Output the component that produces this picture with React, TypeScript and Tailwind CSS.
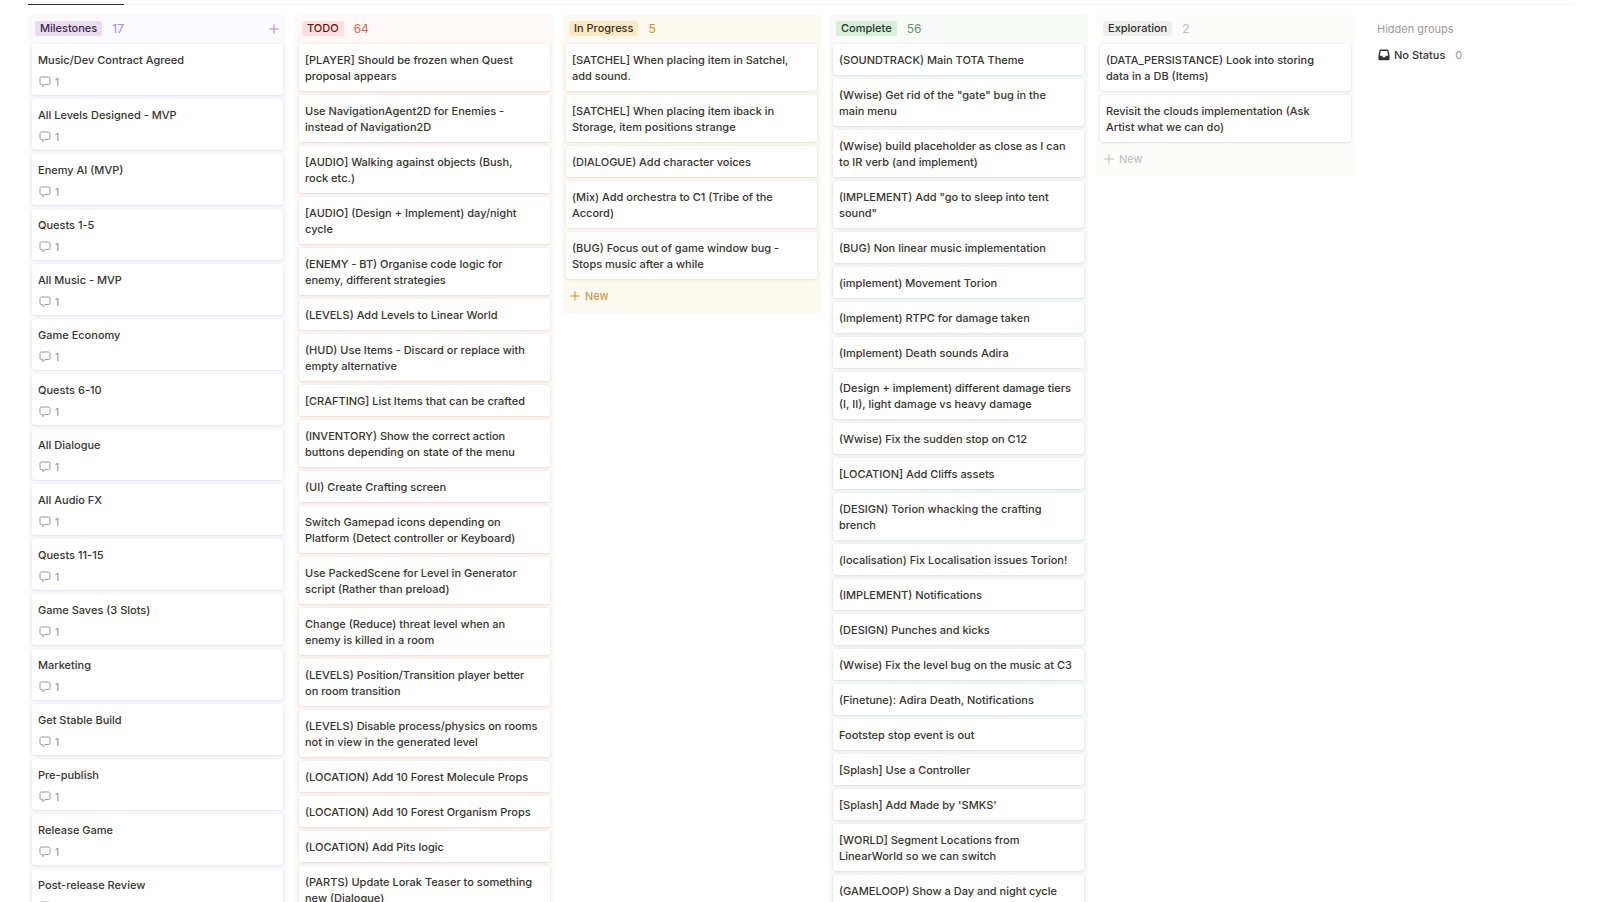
type Theme = {
  column: string;
  tag: string;
  accent: string;
  card: string;
};

type Card = { title: string; comments?: number };

type Group = {
  name: string;
  count: number;
  theme: Theme;
  cards: Card[];
  headerAdd?: boolean;
  footerAdd?: boolean;
};

const themes: Record<string, Theme> = {
  purple: {
    column: "bg-[#faf9fe]",
    tag: "bg-[#e8deee] text-[#412454]",
    accent: "text-[#b283d3]",
    card: "shadow-[0_0_0_1px_rgba(60,40,110,0.02),0_1px_3px_rgba(50,40,80,0.09)]",
  },
  red: {
    column: "bg-[#fef8f6]",
    tag: "bg-[#ffe0dd] text-[#5d1715]",
    accent: "text-[#e0645c]",
    card: "shadow-[0_0_0_1px_rgba(140,50,40,0.02),0_1px_3px_rgba(110,40,40,0.12)]",
  },
  yellow: {
    column: "bg-[#fcf9f1]",
    tag: "bg-[#fdeac5] text-[#402c1b]",
    accent: "text-[#ca8f2e]",
    card: "shadow-[0_0_0_1px_rgba(80,60,20,0.02),0_1px_3px_rgba(70,55,20,0.1)]",
  },
  green: {
    column: "bg-[#f7faf7]",
    tag: "bg-[#d9eddb] text-[#1c3829]",
    accent: "text-[#5a9872]",
    card: "shadow-[0_0_0_1px_rgba(20,50,40,0.02),0_1px_3px_rgba(20,45,35,0.1)]",
  },
  gray: {
    column: "bg-[#fcfcfa]",
    tag: "bg-[#eeeeec] text-[#32302c]",
    accent: "text-[#bdbcb9]",
    card: "shadow-[0_0_0_1px_rgba(20,20,20,0.02),0_1px_3px_rgba(20,20,20,0.1)]",
  },
};

const toCards = (titles: string[], comments?: number): Card[] =>
  titles.map((title) => ({ title, comments }));

const groups: Group[] = [
  {
    name: "Milestones",
    count: 17,
    theme: themes.purple,
    headerAdd: true,
    cards: toCards(
      [
        "Music/Dev Contract Agreed",
        "All Levels Designed - MVP",
        "Enemy AI (MVP)",
        "Quests 1-5",
        "All Music - MVP",
        "Game Economy",
        "Quests 6-10",
        "All Dialogue",
        "All Audio FX",
        "Quests 11-15",
        "Game Saves (3 Slots)",
        "Marketing",
        "Get Stable Build",
        "Pre-publish",
        "Release Game",
        "Post-release Review",
      ],
      1,
    ),
  },
  {
    name: "TODO",
    count: 64,
    theme: themes.red,
    cards: toCards([
      "[PLAYER] Should be frozen when Quest\nproposal appears",
      "Use NavigationAgent2D for Enemies -\ninstead of Navigation2D",
      "[AUDIO] Walking against objects (Bush,\nrock etc.)",
      "[AUDIO] (Design + Implement) day/night\ncycle",
      "(ENEMY - BT) Organise code logic for\nenemy, different strategies",
      "(LEVELS) Add Levels to Linear World",
      "(HUD) Use Items - Discard or replace with\nempty alternative",
      "[CRAFTING] List Items that can be crafted",
      "(INVENTORY) Show the correct action\nbuttons depending on state of the menu",
      "(UI) Create Crafting screen",
      "Switch Gamepad icons depending on\nPlatform (Detect controller or Keyboard)",
      "Use PackedScene for Level in Generator\nscript (Rather than preload)",
      "Change (Reduce) threat level when an\nenemy is killed in a room",
      "(LEVELS) Position/Transition player better\non room transition",
      "(LEVELS) Disable process/physics on rooms\nnot in view in the generated level",
      "(LOCATION) Add 10 Forest Molecule Props",
      "(LOCATION) Add 10 Forest Organism Props",
      "(LOCATION) Add Pits logic",
      "(PARTS) Update Lorak Teaser to something\nnew (Dialogue)",
    ]),
  },
  {
    name: "In Progress",
    count: 5,
    theme: themes.yellow,
    footerAdd: true,
    cards: toCards([
      "[SATCHEL] When placing item in Satchel,\nadd sound.",
      "[SATCHEL] When placing item iback in\nStorage, item positions strange",
      "(DIALOGUE) Add character voices",
      "(Mix) Add orchestra to C1 (Tribe of the\nAccord)",
      "(BUG) Focus out of game window bug -\nStops music after a while",
    ]),
  },
  {
    name: "Complete",
    count: 56,
    theme: themes.green,
    cards: toCards([
      "(SOUNDTRACK) Main TOTA Theme",
      '(Wwise) Get rid of the "gate" bug in the\nmain menu',
      "(Wwise) build placeholder as close as I can\nto IR verb (and implement)",
      '(IMPLEMENT) Add "go to sleep into tent\nsound"',
      "(BUG) Non linear music implementation",
      "(implement) Movement Torion",
      "(Implement) RTPC for damage taken",
      "(Implement) Death sounds Adira",
      "(Design + implement) different damage tiers\n(I, II), light damage vs heavy damage",
      "(Wwise) Fix the sudden stop on C12",
      "[LOCATION] Add Cliffs assets",
      "(DESIGN) Torion whacking the crafting\nbrench",
      "(localisation) Fix Localisation issues Torion!",
      "(IMPLEMENT) Notifications",
      "(DESIGN) Punches and kicks",
      "(Wwise) Fix the level bug on the music at C3",
      "(Finetune): Adira Death, Notifications",
      "Footstep stop event is out",
      "[Splash] Use a Controller",
      "[Splash] Add Made by 'SMKS'",
      "[WORLD] Segment Locations from\nLinearWorld so we can switch",
      "(GAMELOOP) Show a Day and night cycle",
    ]),
  },
  {
    name: "Exploration",
    count: 2,
    theme: themes.gray,
    footerAdd: true,
    cards: toCards([
      "(DATA_PERSISTANCE) Look into storing\ndata in a DB (Items)",
      "Revisit the clouds implementation (Ask\nArtist what we can do)",
    ]),
  },
];

function PlusIcon() {
  return (
    <svg viewBox="0 0 10 10" className="size-[10px]" fill="none" stroke="currentColor" aria-hidden="true">
      <path d="M5 0.3V9.7M0.3 5H9.7" />
    </svg>
  );
}

function CommentIcon() {
  return (
    <svg viewBox="0 0 12 12" className="size-3" fill="none" stroke="currentColor" strokeLinejoin="round" aria-hidden="true">
      <path d="M2.4 1H9.6Q11 1 11 2.4V7.1Q11 8.5 9.6 8.5H6.2L3.8 10.6V8.5H2.4Q1 8.5 1 7.1V2.4Q1 1 2.4 1Z" />
    </svg>
  );
}

function InboxIcon() {
  return (
    <svg viewBox="0 0 12 12" className="size-3" fill="currentColor" aria-hidden="true">
      <path
        fillRule="evenodd"
        d="M2.6 0.6H9.4Q10.3 0.6 10.5 1.5L11.6 6.6V9.8Q11.6 11.3 10.1 11.3H1.9Q0.4 11.3 0.4 9.8V6.6L1.5 1.5Q1.7 0.6 2.6 0.6ZM2.8 1.9L1.8 6.7H4.1Q4.3 8.4 6 8.4Q7.7 8.4 7.9 6.7H10.2L9.2 1.9Z"
      />
    </svg>
  );
}

function BoardCard({ card, shadow }: { card: Card; shadow: string }) {
  return (
    <li className={`rounded-[3px] bg-white px-[6px] pt-2 ${card.comments === undefined ? "pb-[7px]" : "pb-[5px]"} ${shadow}`}>
      <h3 className="whitespace-pre-line font-medium">{card.title}</h3>
      {card.comments !== undefined && (
        <p className="mt-[6px] flex h-4 items-center gap-1 pl-px text-[10px] font-medium text-[#9b9a97]">
          <CommentIcon />
          {card.comments}
        </p>
      )}
    </li>
  );
}

function BoardColumn({ group }: { group: Group }) {
  const { theme } = group;
  return (
    <section className={`w-[259px] shrink-0 rounded-t-[3px] px-1 ${theme.column}`}>
      <header className="flex h-[29px] items-center pr-1 pb-[2px] pl-[3px]">
        <h2 className={`rounded-[3px] px-[5px] leading-[15px] font-medium ${theme.tag}`}>{group.name}</h2>
        <span className={`ml-[10px] text-[12px] ${theme.accent}`}>{group.count}</span>
        {group.headerAdd && (
          <button type="button" aria-label={`Add to ${group.name}`} className={`ml-auto ${theme.accent}`}>
            <PlusIcon />
          </button>
        )}
      </header>
      <ul className="flex flex-col gap-1">
        {group.cards.map((card) => (
          <BoardCard key={card.title} card={card} shadow={theme.card} />
        ))}
      </ul>
      {group.footerAdd && (
        <button type="button" className={`flex h-[34px] items-center gap-[5px] pl-1 ${theme.accent}`}>
          <PlusIcon />
          New
        </button>
      )}
    </section>
  );
}

export default function App() {
  return (
    <div className="flex h-screen flex-col overflow-hidden bg-white font-['Inter',sans-serif] text-[11px] leading-4 text-[#37352f]">
      <div className="mx-7 h-[5px] shrink-0 border-b border-[#f5f5f4]">
        <div className="h-[5px] w-24 border-b border-[#2f2e2a]" />
      </div>
      <main className="flex min-h-0 flex-1 gap-2 px-7 pt-[10px]">
        <div className="flex shrink-0 items-start gap-2">
          {groups.map((group) => (
            <BoardColumn key={group.name} group={group} />
          ))}
        </div>
        <aside className="pl-[14px]">
          <h2 className="flex h-[29px] items-center pb-[2px] text-[#9b9a97]">Hidden groups</h2>
          <button type="button" className="flex h-[22px] items-center gap-1 pl-px font-medium">
            <InboxIcon />
            No Status
            <span className="ml-[6px] font-normal text-[#9b9a97]">0</span>
          </button>
        </aside>
      </main>
    </div>
  );
}
